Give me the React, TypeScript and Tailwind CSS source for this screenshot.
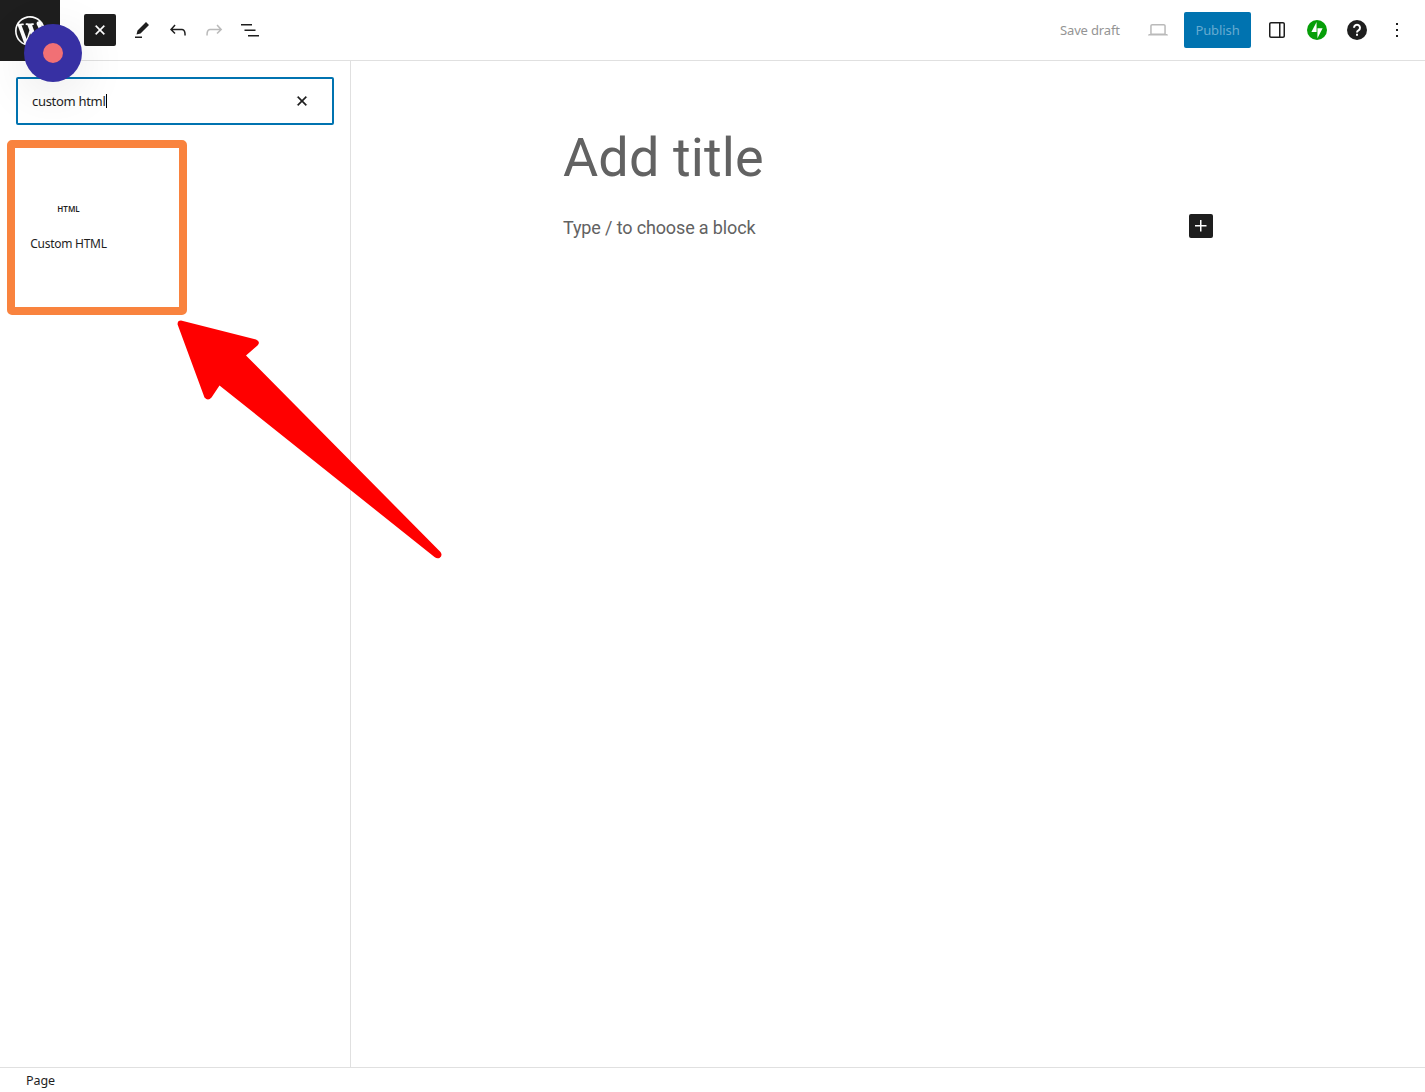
import type { ReactNode } from "react";

function Icon({ d, className = "" }: { d: string; className?: string }) {
  return (
    <svg viewBox="0 0 24 24" width="24" height="24" fill="currentColor" className={`shrink-0 ${className}`}>
      <path d={d} />
    </svg>
  );
}

const CLOSE =
  "M12 13.06l3.712 3.713 1.061-1.06L13.061 12l3.712-3.712-1.06-1.06L12 10.938 8.288 7.227l-1.061 1.06L10.939 12l-3.712 3.712 1.06 1.061L12 13.061z";
const PENCIL = "m19 7-3-3-8.5 8.5-1 4 4-1L19 7Zm-7 11.5H5V20h7v-1.5Z";
const UNDO =
  "M18.3 11.7c-.6-.6-1.4-.9-2.3-.9H6.7l2.9-3.3-1.1-1-4.5 5L8.5 16l1-1-2.7-2.7H16c.5 0 .9.2 1.3.5 1 1 1 3.4 1 4.5v.3h1.5v-.2c0-1.5 0-4.3-1.5-5.7z";
const REDO =
  "M15.6 6.5l-1.1 1 2.9 3.3H8c-.9 0-1.7.3-2.3.9-1.4 1.5-1.4 4.2-1.4 5.6v.2h1.5v-.3c0-1.1 0-3.5 1-4.5.3-.3.7-.5 1.3-.5h9.2L14.5 15l1.1 1.1 4.6-4.6-4.6-5z";
const LIST = "M3 6h11v1.5H3V6Zm3.5 5.5h11V13h-11v-1.5ZM21 17H10v1.5h11V17Z";
const DESKTOP =
  "M20.5 16h-.7V8c0-1.1-.9-2-2-2H6.2c-1.1 0-2 .9-2 2v8h-.7c-.8 0-1.5.7-1.5 1.5h20c0-.8-.7-1.5-1.5-1.5zM5.7 8c0-.3.2-.5.5-.5h11.6c.3 0 .5.2.5.5v7.6H5.7V8z";
const DRAWER =
  "M18 4H6c-1.1 0-2 .9-2 2v12c0 1.1.9 2 2 2h12c1.1 0 2-.9 2-2V6c0-1.1-.9-2-2-2zm-4 14.5H6c-.3 0-.5-.2-.5-.5V6c0-.3.2-.5.5-.5h8v13zm4.5-.5c0 .3-.2.5-.5.5h-2.5v-13H18c.3 0 .5.2.5.5v12z";
const MORE = "M13 19h-2v-2h2v2zm0-6h-2v-2h2v2zm0-6h-2V5h2v2z";
const PLUS = "M11 12.5V17.5H12.5V12.5H17.5V11H12.5V6H11V11H6V12.5H11Z";
const WORDPRESS =
  "M20 10c0-5.51-4.49-10-10-10C4.48 0 0 4.49 0 10c0 5.52 4.48 10 10 10 5.51 0 10-4.48 10-10zM7.78 15.37L4.37 6.22c.55-.02 1.17-.08 1.17-.08.5-.06.44-1.13-.06-1.11 0 0-1.45.11-2.37.11-.18 0-.37 0-.58-.01C4.12 2.69 6.87 1.11 10 1.11c2.33 0 4.45.87 6.05 2.34-.68-.11-1.65.39-1.65 1.58 0 .74.45 1.36.9 2.1.35.61.55 1.36.55 2.46 0 1.49-1.4 5-1.4 5l-3.03-8.37c.54-.02.82-.17.82-.17.5-.05.44-1.25-.06-1.22 0 0-1.44.12-2.38.12-.87 0-2.33-.12-2.33-.12-.5-.03-.56 1.2-.06 1.22l.92.08 1.26 3.41zM17.41 10c.24-.64.74-1.87.43-4.25.7 1.29 1.05 2.71 1.05 4.25 0 3.29-1.73 6.24-4.4 7.78.97-2.59 1.94-5.2 2.92-7.78zM6.1 18.09C3.12 16.65 1.11 13.53 1.11 10c0-1.3.23-2.48.72-3.59C3.25 10.3 4.67 14.2 6.1 18.09zm4.03-6.63l2.58 6.98c-.86.29-1.76.45-2.71.45-.79 0-1.57-.11-2.29-.33.81-2.38 1.62-4.74 2.42-7.1z";

function IconButton({ label, children }: { label: string; children: ReactNode }) {
  return (
    <button aria-label={label} className="flex size-8 items-center justify-center">
      {children}
    </button>
  );
}

function Header() {
  return (
    <header className="flex h-[61px] shrink-0 border-b border-[#e0e0e0]">
      <div className="flex h-[61px] w-[60px] shrink-0 items-center justify-center bg-[#1e1e1e] text-white">
        <svg viewBox="-2 -2 24 24" width="36" height="36" fill="currentColor">
          <path d={WORDPRESS} />
        </svg>
      </div>
      <div className="flex flex-1 items-center pl-6">
        <button aria-label="Close inserter" className="mr-2.5 flex size-8 items-center justify-center rounded-[2px] bg-[#1e1e1e] text-white">
          <Icon d={CLOSE} className="stroke-current stroke-[0.35px]" />
        </button>
        <div className="flex gap-1">
          <IconButton label="Tools"><Icon d={PENCIL} /></IconButton>
          <IconButton label="Undo"><Icon d={UNDO} /></IconButton>
          <IconButton label="Redo"><Icon d={REDO} className="opacity-30" /></IconButton>
          <IconButton label="List view"><Icon d={LIST} /></IconButton>
        </div>
      </div>
      <div className="flex items-center pr-3">
        <span className="mr-[22px] w-[60px] pt-0.5 text-[13px] tracking-[-0.15px] whitespace-nowrap text-[#949494]">Save draft</span>
        <IconButton label="Preview"><Icon d={DESKTOP} className="opacity-30" /></IconButton>
        <button className="mr-2.5 ml-2.5 h-9 w-[67px] rounded-[2px] bg-[#0073b0] pt-0.5 text-[13px] tracking-[-0.1px] text-[#66abd0]">Publish</button>
        <div className="flex gap-2">
          <IconButton label="Settings"><Icon d={DRAWER} /></IconButton>
          <IconButton label="Jetpack">
            <svg viewBox="0 0 32 32" width="20" height="20">
              <circle cx="16" cy="16" r="16" fill="#069e08" />
              <path d="M15.300 19H7l8.300-16zM16.700 29V13H25z" fill="#fff" />
            </svg>
          </IconButton>
          <IconButton label="Help">
            <svg viewBox="0 0 20 20" width="20" height="20" fill="none">
              <circle cx="10" cy="10" r="10" fill="#1e1e1e" />
              <path d="M7 7.7a3 3 0 1 1 4.5 2.6c-1 .6-1.500 1-1.500 2.100" stroke="#fff" strokeWidth="2" />
              <path d="M9 13.700h2v2H9z" fill="#fff" />
            </svg>
          </IconButton>
          <IconButton label="Options"><Icon d={MORE} /></IconButton>
        </div>
      </div>
    </header>
  );
}

function Inserter() {
  return (
    <aside className="w-[351px] shrink-0 border-r border-[#e0e0e0]">
      <div className="mx-4 mt-4 flex h-12 w-[318px] items-center rounded-[2px] border-2 border-[#0073b0] pr-[18px] pl-3.5">
        <span className="pt-0.5 text-[13px] tracking-[-0.3px] whitespace-nowrap">custom html</span>
        <span className="h-3.5 w-px bg-black" />
        <Icon d={CLOSE} className="ml-auto stroke-current stroke-[0.35px]" />
      </div>
      <div className="mt-[15px] ml-[7px] h-[175px] w-[180px] rounded-[5px] border-8 border-[#f9833e]">
        <div className="flex w-[107px] flex-col items-center pt-[55px]">
          <span className="h-3 text-[8px] leading-3 font-semibold tracking-[0.05px]">HTML</span>
          <span className="mt-[19px] text-[12px] leading-5 tracking-[-0.27px] whitespace-nowrap">Custom HTML</span>
        </div>
      </div>
    </aside>
  );
}

function Canvas() {
  return (
    <main className="flex-1 pl-[212px] font-['Roboto',sans-serif] text-[#626262]">
      <h1 className="mt-[65px] h-16 text-[54px] leading-[64px] tracking-[0.1px] whitespace-nowrap">Add title</h1>
      <div className="mt-6 flex h-6 w-[650px] items-center justify-between">
        <p className="pt-1 text-[18px] leading-6 tracking-[-0.14px] whitespace-nowrap">Type / to choose a block</p>
        <button aria-label="Add block" className="flex size-6 items-center justify-center rounded-[2px] bg-[#1e1e1e] text-white">
          <Icon d={PLUS} />
        </button>
      </div>
    </main>
  );
}

export default function App() {
  return (
    <div className="relative flex h-[1092px] w-[1425px] flex-col overflow-hidden bg-white font-['Noto_Sans',sans-serif] text-[#1e1e1e]">
      <Header />
      <div className="flex min-h-0 flex-1">
        <Inserter />
        <Canvas />
      </div>
      <footer className="flex h-[25px] shrink-0 items-center border-t border-[#e0e0e0] pt-0.5 pl-[26px] text-[12.5px] tracking-[-0.1px]">Page</footer>

      {/* Floating recorder control */}
      <div className="absolute top-6 left-6 flex size-[58px] items-center justify-center rounded-full bg-[#3730a3] shadow-[0_10px_50px_rgba(0,0,0,0.1)]">
        <span className="size-5 rounded-full bg-[#f17075]" />
      </div>

      {/* Arrow annotation */}
      <svg className="pointer-events-none absolute top-[310px] left-[170px]" width="290" height="260" viewBox="170 310 290 260">
        <path
          d="M181 320.5L256 339.4Q261 342 257.500 345.500L246 355.500L440.500 552Q443 555.500 439.500 558Q437 559 434.500 557L219.500 385.500L211.500 397.500Q208 401.500 204.500 397.500L177.600 324.500Q177.300 320.500 181 320.500Z"
          fill="#ff0000"
        />
      </svg>
    </div>
  );
}
